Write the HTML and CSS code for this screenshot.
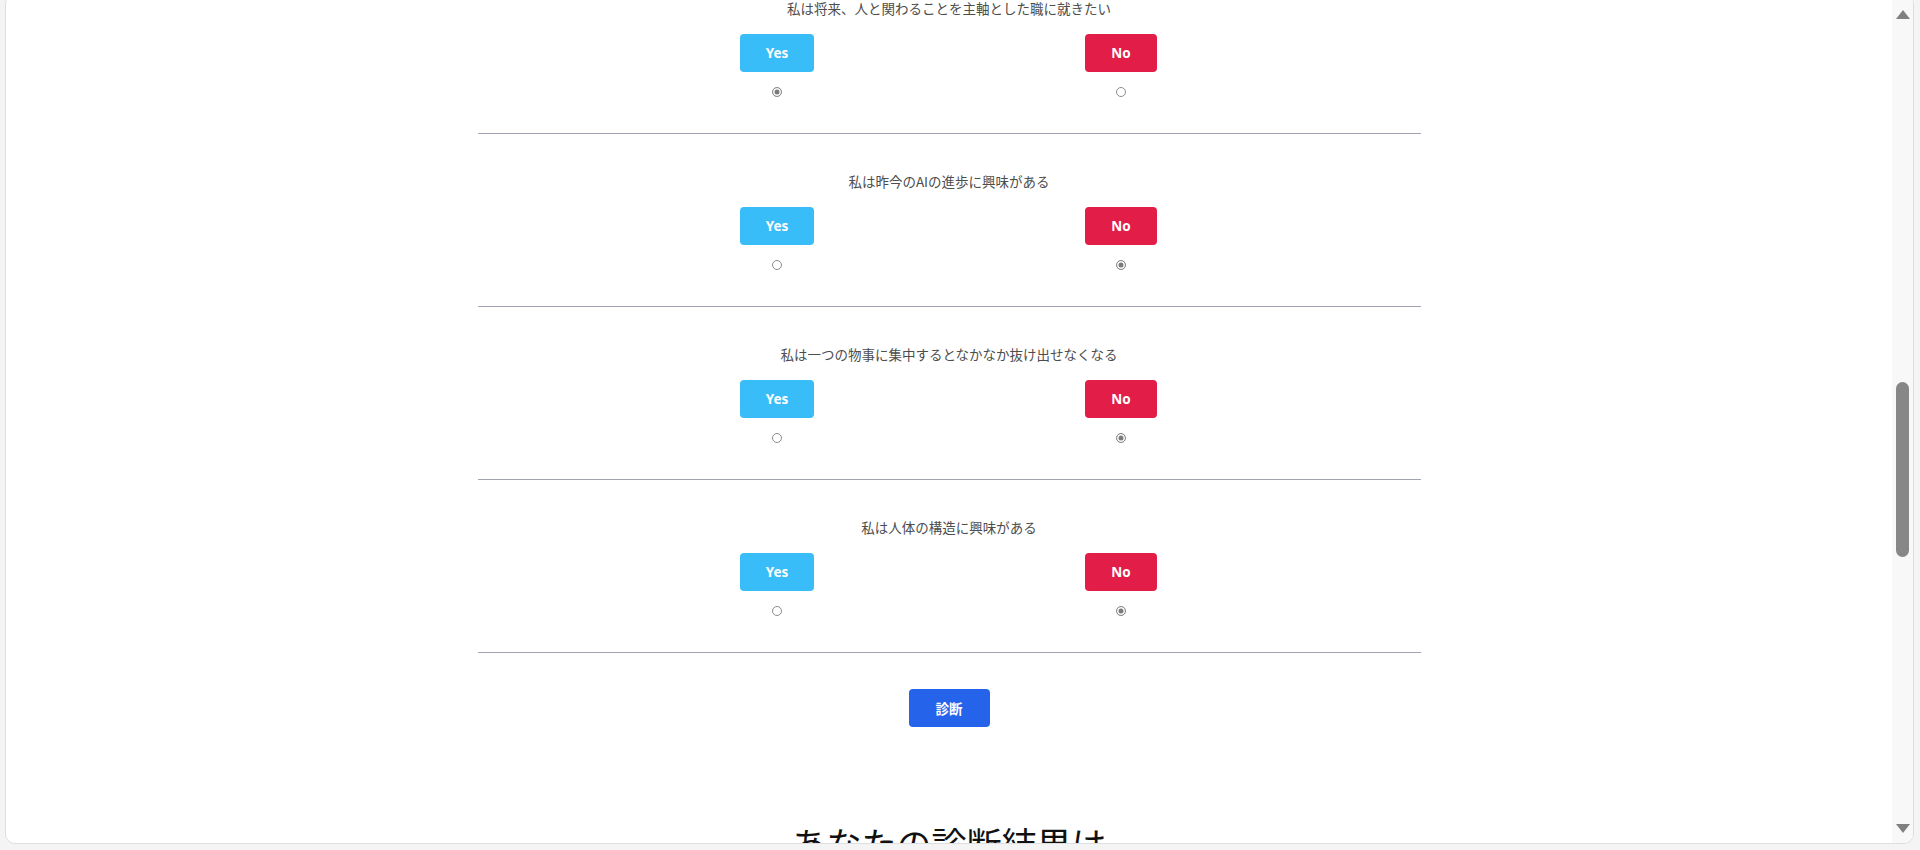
FILE: index.html
```html
<!DOCTYPE html>
<html lang="ja">
<head>
<meta charset="utf-8">
<title>診断</title>
<link rel="stylesheet" href="styles.css">
</head>
<body>
<div class="frame">
  <div class="panel">
    <div class="viewport">
      <main class="quiz">
        <section class="q">
          <p class="q-text">私は将来、人と関わることを主軸とした職に就きたい</p>
          <div class="choices">
            <div class="choice"><button class="btn yes">Yes</button><input class="radio" type="radio" name="q1" checked></div>
            <div class="choice"><button class="btn no">No</button><input class="radio" type="radio" name="q1"></div>
          </div>
        </section>
        <section class="q">
          <p class="q-text">私は昨今のAIの進歩に興味がある</p>
          <div class="choices">
            <div class="choice"><button class="btn yes">Yes</button><input class="radio" type="radio" name="q2"></div>
            <div class="choice"><button class="btn no">No</button><input class="radio" type="radio" name="q2" checked></div>
          </div>
        </section>
        <section class="q">
          <p class="q-text">私は一つの物事に集中するとなかなか抜け出せなくなる</p>
          <div class="choices">
            <div class="choice"><button class="btn yes">Yes</button><input class="radio" type="radio" name="q3"></div>
            <div class="choice"><button class="btn no">No</button><input class="radio" type="radio" name="q3" checked></div>
          </div>
        </section>
        <section class="q">
          <p class="q-text">私は人体の構造に興味がある</p>
          <div class="choices">
            <div class="choice"><button class="btn yes">Yes</button><input class="radio" type="radio" name="q4"></div>
            <div class="choice"><button class="btn no">No</button><input class="radio" type="radio" name="q4" checked></div>
          </div>
        </section>
        <div class="submit-row"><button class="btn submit">診断</button></div>
        <h2 class="result-title">あなたの診断結果は</h2>
      </main>
    </div>
    <div class="scrollbar">
      <span class="arrow up"></span>
      <span class="thumb"></span>
      <span class="arrow down"></span>
    </div>
  </div>
</div>
</body>
</html>
```

FILE: styles.css
```css
html, body {
  margin: 0;
  height: 100%;
  overflow: hidden;
  background: #f4f4f4;
  font-family: "Noto Sans", "Noto Sans CJK JP", sans-serif;
}

.frame {
  height: 850px;
  padding: 0 6px 6px 5px;
  box-sizing: border-box;
}

.panel {
  height: 850px;
  margin-top: -6px;
  box-sizing: border-box;
  display: flex;
  background: #fff;
  border: 1px solid #dedede;
  border-radius: 10px;
  overflow: hidden;
}

.viewport {
  flex: 1;
  min-width: 0;
  overflow: hidden;
}

.quiz {
  width: 50%;
  margin: -34px auto 0;
}

.q {
  padding: 37px 0 36px;
  border-bottom: 1px solid #a0a3b0;
}

.q-text {
  margin: 0 0 16px;
  font-family: "Noto Sans CJK JP", sans-serif;
  font-size: 13.5px;
  line-height: 20px;
  text-align: center;
  color: #4d4d4d;
}

.choices {
  display: grid;
  grid-template-columns: 344px 344px;
  justify-content: center;
}

.choice {
  display: flex;
  flex-direction: column;
  align-items: center;
  gap: 15px;
}

.btn {
  height: 38px;
  padding: 0 26px;
  border: none;
  border-radius: 4px;
  color: #fff;
  font-family: "Noto Sans", "Noto Sans CJK JP", sans-serif;
  font-weight: 700;
  font-size: 13.5px;
  line-height: 38px;
}

.yes { background: #38bdf8; }
.no { background: #e11d48; }

.radio {
  appearance: none;
  -webkit-appearance: none;
  margin: 0;
  width: 10px;
  height: 10px;
  box-sizing: border-box;
  border: 1px solid #8c8c8c;
  border-radius: 50%;
  background: #fff;
}

.radio:checked {
  background: #7b7b7b;
  box-shadow: inset 0 0 0 1.5px #fff;
}

.submit-row {
  padding-top: 36px;
  display: flex;
  justify-content: center;
}

.submit {
  padding: 0 27px;
  background: #2563eb;
  font-family: "Noto Sans CJK JP", sans-serif;
}

.result-title {
  margin: 95px 0 0;
  font-family: "Noto Sans CJK JP", sans-serif;
  font-size: 35px;
  font-weight: 400;
  line-height: 1.2;
  text-align: center;
  color: #111;
}

.scrollbar {
  width: 21px;
  flex: none;
  background: #f8f8f8;
  display: flex;
  flex-direction: column;
  align-items: center;
}

.arrow {
  width: 0;
  height: 0;
  border-left: 7.5px solid transparent;
  border-right: 7.5px solid transparent;
}

.arrow.up {
  margin-top: 15px;
  border-bottom: 9px solid #808080;
}

.arrow.down {
  margin-top: auto;
  margin-bottom: 10px;
  border-top: 9px solid #808080;
}

.thumb {
  margin-top: 363px;
  width: 13px;
  height: 175px;
  border-radius: 7px;
  background: #878787;
}
```
